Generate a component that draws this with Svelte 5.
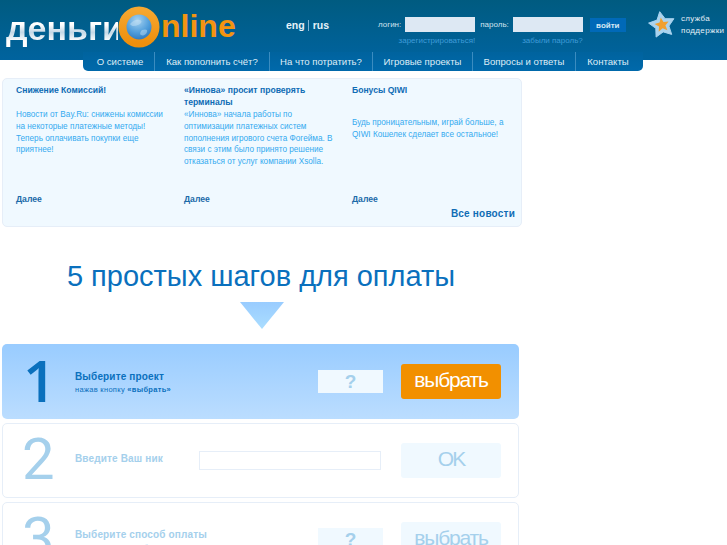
<script>
	const nav = ['О системе', 'Как пополнить счёт?', 'На что потратить?', 'Игровые проекты', 'Вопросы и ответы', 'Контакты'];

	const news = [
		{
			title: 'Снижение Комиссий!',
			gap: true,
			text: 'Новости от Bay.Ru: снижены комиссии на некоторые платежные методы! Теперь оплачивать покупки еще приятнее!'
		},
		{
			title: '«Иннова» просит проверять терминалы',
			gap: false,
			text: '«Иннова» начала работы по оптимизации платежных систем пополнения игрового счета Фогейма. В связи с этим было принято решение отказаться от услуг компании Xsolla.'
		},
		{
			title: 'Бонусы QIWI',
			gap: true,
			text: 'Будь проницательным, играй больше, а QIWI Кошелек сделает все остальное!',
			low: true
		}
	];

	// five tips, tilted a little, around the middle of a 28px box
	function star(outer, inner) {
		const pts = [];
		for (let i = 0; i < 10; i++) {
			const r = i % 2 ? inner : outer;
			const a = ((-100 + i * 36) * Math.PI) / 180;
			pts.push((14 + r * Math.cos(a)).toFixed(1) + ',' + (14 + r * Math.sin(a)).toFixed(1));
		}
		return pts.join(' ');
	}
</script>

<div class="page">
	<header class="top">
		<div class="logo">
			<span class="logo-ru">деньги</span>
			<svg class="globe" width="42" height="42" viewBox="0 0 42 42">
				<defs>
					<linearGradient id="ring" x1="0" y1="0" x2="0" y2="1">
						<stop offset="0" stop-color="#f5a730" />
						<stop offset="1" stop-color="#ef8f0c" />
					</linearGradient>
					<radialGradient id="ball" cx="0.45" cy="0.3" r="0.75">
						<stop offset="0" stop-color="#a6d2f0" />
						<stop offset="0.5" stop-color="#4f9ddb" />
						<stop offset="1" stop-color="#1a62ad" />
					</radialGradient>
				</defs>
				<circle cx="21" cy="21" r="16.5" fill="url(#ball)" stroke="url(#ring)" stroke-width="8" />
				<path d="M12 18c3-4 7-5 10-4s1 4-2 5-6 2-8-1zM24 24c3-1 6-1 5 2s-4 4-6 3 0-4 1-5z" fill="#cfe6f7" opacity="0.45" />
			</svg>
			<span class="logo-en">nline</span>
		</div>

		<div class="lang"><b>eng</b><i></i><b>rus</b></div>

		<form class="login">
			<div class="field">
				<div class="row"><label for="login">логин:</label><input id="login" /></div>
				<a class="hint" href="#reg">зарегистрироваться!</a>
			</div>
			<div class="field">
				<div class="row"><label for="pass">пароль:</label><input id="pass" /></div>
				<a class="hint" href="#forgot">забыли пароль?</a>
			</div>
			<button type="button" class="enter">войти</button>
		</form>

		<div class="support">
			<svg width="28" height="28" viewBox="0 0 28 28">
				<polygon points={star(13.5, 7)} fill="#a9d3ef" stroke="#a9d3ef" stroke-linejoin="round" />
				<polygon points={star(7.5, 3.4)} fill="#f0a030" />
			</svg>
			<span>служба<br />поддержки</span>
		</div>
	</header>

	<nav class="menu">
		{#each nav as item}
			<a href="#m">{item}</a>
		{/each}
	</nav>

	<section class="news">
		{#each news as n}
			<article>
				<h3>{n.title}</h3>
				<p class:gap={n.gap} class:low={n.low}>{n.text}</p>
				<a href="#more" class="more">Далее</a>
			</article>
		{/each}
		<a href="#all" class="all">Все новости</a>
	</section>

	<h1>5 простых шагов для оплаты</h1>
	<svg class="arrow" width="46" height="27" viewBox="0 0 46 27">
		<defs>
			<linearGradient id="arr" x1="0" y1="0" x2="0" y2="1">
				<stop offset="0" stop-color="#99ccff" />
				<stop offset="1" stop-color="#aaddff" />
			</linearGradient>
		</defs>
		<path d="M1 0H45L23 27Z" fill="url(#arr)" />
	</svg>

	<div class="steps">
		<div class="step active">
			<span class="num">1</span>
			<div class="label"><b>Выберите проект</b><small>нажав кнопку <em>«выбрать»</em></small></div>
			<span class="q">?</span>
			<span class="btn">выбрать</span>
		</div>
		<div class="step">
			<span class="num">2</span>
			<div class="label nick"><b>Введите Ваш ник</b></div>
			<span class="nick-input"></span>
			<span class="btn ok">OK</span>
		</div>
		<div class="step">
			<span class="num">3</span>
			<div class="label"><b>Выберите способ оплаты</b><small>нажав кнопку <em>«выбрать»</em></small></div>
			<span class="q">?</span>
			<span class="btn">выбрать</span>
		</div>
	</div>
</div>

<style>
	:global(body) {
		background: #fff;
		overflow: hidden;
	}

	.page {
		height: 545px;
		overflow: hidden;
		font-family: "Liberation Sans", Arial, sans-serif;
	}

	.top {
		height: 52px;
		padding-bottom: 8px;
		display: flex;
		background: linear-gradient(#005b80, #00639e);
		color: #fff;
		position: relative;
	}

	.logo {
		width: 272px;
		padding: 5px 0 0 6px;
		display: flex;
		align-items: flex-start;
		box-sizing: border-box;
		font-weight: bold;
	}

	.logo-ru {
		width: 112px;
		flex: none;
		padding-top: 2px;
		font-size: 34px;
		line-height: 42px;
		white-space: nowrap;
		background: linear-gradient(#fff 45%, #c3d8e6 62%, #fff 82%);
		-webkit-background-clip: text;
		background-clip: text;
		color: transparent;
	}

	.globe {
		margin-top: 1px;
		flex: none;
	}

	.logo-en {
		margin-left: 1px;
		font-size: 32px;
		line-height: 42px;
		color: #f29410;
	}

	.lang {
		width: 92px;
		padding-top: 19px;
		box-sizing: border-box;
		display: flex;
		align-items: flex-start;
		margin-left: 14px;
		font-size: 10.5px;
		line-height: 13px;
		color: #e6f2fa;
	}

	.lang i {
		width: 1px;
		height: 11px;
		margin: 1px 3.5px 0;
		background: #7fb2d4;
	}

	.login {
		display: flex;
		align-items: flex-start;
		padding-top: 17px;
		font-size: 8px;
		width: 270px;
		box-sizing: border-box;
	}

	.field {
		display: flex;
		flex-direction: column;
		align-items: flex-end;
		margin-right: 5px;
	}

	.row {
		display: flex;
		align-items: center;
		gap: 4px;
		color: #cfe2ef;
	}

	input {
		width: 70px;
		height: 15px;
		padding: 0;
		border: 0;
		background: #dde8f3;
	}

	.hint {
		margin-top: 3px;
		color: #3f9bd8;
		text-decoration: none;
		line-height: 11px;
	}

	.enter {
		width: 36px;
		height: 14px;
		padding: 0;
		margin: 1px 0 0 2px;
		border: 0;
		background: #0069b8;
		color: #d8e9f5;
		font: bold 8px "Liberation Sans", sans-serif;
	}

	.support {
		display: flex;
		gap: 5px;
		padding-top: 11px;
		font-size: 8px;
		line-height: 12px;
		letter-spacing: 0.35px;
		color: #e4eff7;
		white-space: nowrap;
	}

	.support span {
		padding-top: 2px;
	}

	.menu {
		display: grid;
		grid-template-columns: 71px 115px 103px 100px 103px 68px;
		width: 560px;
		height: 19px;
		margin: -8px 0 7px 83px;
		position: relative;
		background: linear-gradient(#00639e, #0069ab);
		border-radius: 0 0 5px 5px;
	}

	.menu a {
		border-left: 1px solid #3b8cc0;
		color: #dfedf7;
		font-size: 9.6px;
		line-height: 19px;
		text-align: center;
		text-decoration: none;
		white-space: nowrap;
	}

	.menu a:first-child {
		border-left: 0;
		padding-left: 3px;
	}

	.menu a:last-child {
		padding-right: 3px;
	}

	.news {
		position: relative;
		display: flex;
		width: 520px;
		height: 149px;
		margin-left: 2px;
		box-sizing: border-box;
		padding: 5px 0 0 13px;
		background: #f0f9ff;
		border: 1px solid #e6eef8;
		border-radius: 5px;
	}

	article {
		position: relative;
		width: 168px;
		flex: none;
		height: 121px;
		box-sizing: border-box;
		padding-right: 11px;
	}

	h3 {
		margin: 0;
		color: #0f6cb5;
		font-size: 8.6px;
		line-height: 12px;
	}

	p {
		margin: 1px 0 0;
		color: #34aaf0;
		font-size: 8.2px;
		line-height: 11.8px;
	}

	p.gap {
		margin-top: 13px;
	}

	p.low {
		margin-top: 21px;
	}

	.more {
		position: absolute;
		left: 0;
		bottom: 0;
		color: #1a6aa8;
		font-size: 8.6px;
		font-weight: bold;
		line-height: 12px;
		text-decoration: none;
	}

	.all {
		position: absolute;
		right: 6px;
		bottom: 7px;
		color: #0f6cb5;
		font-size: 10px;
		font-weight: bold;
		letter-spacing: 0.2px;
		text-decoration: none;
	}

	h1 {
		width: 522px;
		margin: 31px 0 0;
		color: #0a70bd;
		font-size: 29px;
		font-weight: normal;
		line-height: 36px;
		text-align: center;
	}

	.arrow {
		display: block;
		margin: 8px 0 15px 239px;
	}

	.steps {
		width: 517px;
		margin-left: 2px;
		display: flex;
		flex-direction: column;
		gap: 4px;
	}

	.step {
		position: relative;
		height: 75px;
		flex: none;
		box-sizing: border-box;
		border: 1px solid #e6eef8;
		border-radius: 5px;
		display: flex;
		align-items: center;
		background: #fff;
		padding-right: 17px;
		color: #a5d0ec;
	}

	.step.active {
		border: 0;
		padding: 0 18px 0 1px;
		background: linear-gradient(#99ccff, #bbddff);
		color: #0a70bd;
	}

	.num {
		width: 72px;
		padding-left: 19px;
		box-sizing: border-box;
		font-family: Roboto, "Liberation Sans", sans-serif;
		font-size: 58px;
		line-height: 60px;
		margin-top: -4px;
		flex: none;
	}

	.active .num {
		padding-left: 20px;
		font-family: "Open Sans", sans-serif;
		font-weight: 600;
	}

	.label {
		flex: 1;
		display: flex;
		flex-direction: column;
		gap: 1px;
		margin-top: 1px;
	}

	.label b {
		font-size: 10px;
		line-height: 13px;
		letter-spacing: 0.15px;
	}

	.label small {
		font-size: 7.5px;
		line-height: 11px;
		letter-spacing: 0.3px;
	}

	.label em {
		font-style: normal;
		font-weight: bold;
	}

	.nick {
		flex: none;
		width: 124px;
		margin-top: -5px;
	}

	.nick-input {
		width: 182px;
		height: 19px;
		margin-right: 20px;
		box-sizing: border-box;
		border: 1px solid #e6eef8;
		background: #fff;
	}

	.q {
		width: 65px;
		height: 23px;
		margin-right: 18px;
		background: #f0f9ff;
		color: #a5d0ec;
		font-size: 19px;
		font-weight: bold;
		line-height: 23px;
		text-align: center;
	}

	.btn {
		width: 100px;
		height: 35px;
		flex: none;
		border-radius: 3px;
		background: #f0f9ff;
		color: #a5d0ec;
		font-size: 21px;
		line-height: 32px;
		letter-spacing: -1.2px;
		text-align: center;
	}

	.btn.ok {
		letter-spacing: -2px;
	}

	.active .btn {
		background: #f29000;
		color: #fff;
	}
</style>
